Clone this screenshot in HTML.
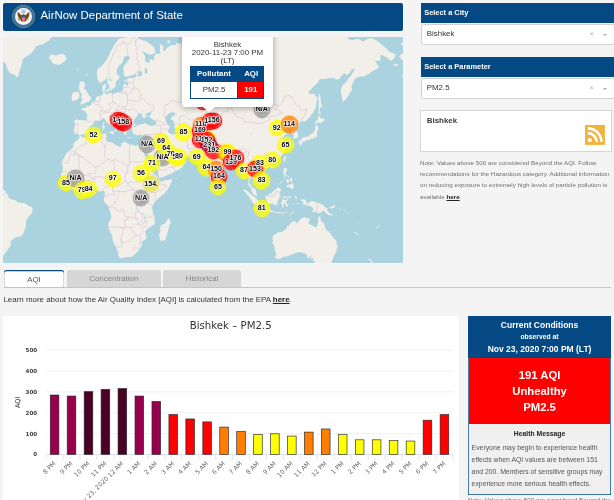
<!DOCTYPE html>
<html lang="en"><head><meta charset="utf-8"><title>AirNow Department of State</title>
<style>
html,body{margin:0;padding:0}
body{width:614px;height:500px;overflow:hidden;background:#f4f4f4;font-family:"Liberation Sans",Arial,Helvetica,sans-serif;position:relative;color:#333;will-change:transform}
.abs{position:absolute}
.hdr{left:3.3px;top:2.6px;width:399.8px;height:28.1px;background:#044983;border-radius:2px;box-shadow:0 0 0 .6px #fff}
.hdr .t{position:absolute;left:37.2px;top:-1.8px;line-height:28px;font-size:11.45px;color:#fff;white-space:nowrap}
.map{left:3.3px;top:36.9px;width:399.8px;height:226.3px;background:#aad3df;overflow:hidden}
.mk{position:absolute;box-sizing:border-box;width:16.4px;height:16.4px;margin:-8.2px 0 0 -8.2px;border-radius:50%;border:1.5px solid;background-clip:padding-box}
.ml{position:absolute;width:30px;margin:-4.4px 0 0 -15px;text-align:center;font-weight:bold;font-size:7.1px;line-height:8px;color:#000;text-shadow:0 0 1px #fff,0 0 1px #fff,0 0 1px #fff,0 0 1px #fff,0 0 1.5px #fff,0 0 1.5px #fff,0 0 2px #fff,0 0 2px #fff,0 0 2px #fff}
.pop{left:178.7px;top:-9.9px;width:91px;height:80.2px;background:#fff;border-radius:3.6px;box-shadow:0 1px 6px rgba(0,0,0,.35)}
.pop .tx{position:absolute;left:0;right:0;text-align:center;font-size:7.9px;line-height:9px;color:#333}
.tip{left:199.9px;top:70.2px;width:0;height:0;border-left:6.2px solid transparent;border-right:6.2px solid transparent;border-top:5.1px solid #fff}
.ptab{position:absolute;left:8px;top:38.6px;width:74.4px;height:33px;background:#044983}
.ptab div{position:absolute;text-align:center;font-size:7.9px}
.lab{left:421px;width:193px;height:19.6px;background:#044983;color:#fff;font-weight:bold;font-size:7.45px;line-height:19.6px;text-indent:3.2px}
.sel{left:420.6px;width:192.4px;height:19.2px;background:#fff;border:.6px solid #d2d2d2;border-radius:2.3px;font-size:7.9px;line-height:18.6px;text-indent:5.2px;color:#333}
.sel i{position:absolute;font-style:normal}
.note{color:#707070;font-size:6.25px;line-height:11.35px;white-space:nowrap}
.note b,.lm b{color:#222;text-decoration:underline}
.tab{top:269.6px;height:17px;background:#d6d6d6;border-radius:2.5px 2.5px 0 0;font-size:7.9px;line-height:18.4px;text-align:center;color:#858585}
.cc{left:468px;top:315.6px;width:143.1px;height:179px;background:#f0f0f0;box-shadow:inset 0 0 0 .7px #044983}
.cc div{position:absolute;left:0;right:0;text-align:center;white-space:nowrap}
</style></head><body>

<div class="abs hdr">
<svg class="abs" style="left:8.7px;top:2.5px" width="23" height="23" viewBox="-11.5 -11.5 23 23">
<circle r="11.3" fill="#2c5f9e"/><circle r="11.1" fill="none" stroke="#a9b866" stroke-width=".6"/>
<circle r="9.9" fill="#3f74b4"/><circle r="8.5" fill="#f6f4ee"/>
<circle cy="-4.700" r="2.300" fill="#a8c8e2"/>
<path d="M-5.600-4.800C-4.600-3.800-3.400-2.400-1.900-1.300L0-2.300 1.900-1.300C3.400-2.400 4.600-3.800 5.600-4.800 6.400-2.200 5.600.900 3.300 2.700L2.100 5H-2.100L-3.300 2.700C-5.600.900-6.400-2.200-5.600-4.800Z" fill="#6a4a1e"/>
<path d="M-1.600.300H1.600V2.800C1.600 3.900.8 4.500 0 4.800-.8 4.500-1.600 3.900-1.600 2.800Z" fill="#e8787c"/><rect x="-1.600" y="-.200" width="3.200" height="1.100" fill="#3b5aa0"/>
<path d="M-6.400 1.600C-5.600 3.200-4.400 4.200-3.200 4.400L-3.800 2.800Z" fill="#5d8a45"/><path d="M6.400 1.600C5.600 3.200 4.400 4.200 3.200 4.400L3.800 2.800Z" fill="#b9b9a8"/>
</svg>
<div class="t">AirNow Department of State</div>
</div>

<div class="abs map">
<svg class="abs" style="left:0;top:0" width="400" height="226.3" viewBox="0 0 400 226.3">
<path d="M-6.6 -6.9L49.6 -6.9L48.8 -0.1L45.6 3.7L42.3 5.8L39.4 7.4L35.8 8.1L32.9 9.4L31.7 11.8L29.3 15.1L26.8 17.5L23.6 19.2L21.1 20.8L19.5 23.2L19.2 26.5L17.9 29.7L16.6 33.0L15.9 36.7L14.6 40.3L13.0 39.5L11.4 37.4L8.9 37.1L6.5 35.4L4.5 32.2L3.2 28.1L1.6 25.7L0.3 24.0L-6.6 22.4ZM46.4 19.2L48.5 17.2L50.4 17.9L52.9 18.8L56.1 17.5L59.4 16.7L61.8 18.3L63.5 21.6L61.8 24.4L58.6 26.5L55.3 28.1L52.1 27.3L48.8 25.7L48.5 23.2L45.9 21.6ZM76.5 46.0L78.1 44.4L80.1 43.9L81.4 46.0L82.2 49.3L80.6 50.9L83.0 53.4L84.6 55.8L86.0 58.2L87.9 59.9L87.6 62.8L85.5 64.8L82.2 66.1L78.9 67.2L76.8 67.7L78.1 64.8L79.8 62.3L78.1 60.7L78.9 57.4L77.3 55.0L75.7 52.5L76.2 49.3ZM69.7 55.8L72.4 54.7L75.7 55.0L76.5 58.2L75.7 61.5L72.4 63.5L69.2 63.9L68.4 60.7ZM97.3 45.7L95.1 43.8L94.4 41.6L94.1 38.7L93.9 36.1L94.2 33.1L96.0 30.6L98.6 28.9L100.6 26.7L103.0 23.7L104.6 21.1L106.2 17.9L107.5 14.3L109.4 11.8L110.7 8.8L112.7 6.1L114.8 3.4L116.7 1.6L120.8 0.8L124.8 0.3L124.8 -9.3L134.5 -9.3L134.5 0.3L136.1 1.8L137.7 2.5L140.2 3.6L143.4 4.3L146.6 6.6L149.9 9.2L152.0 12.2L152.6 14.7L151.2 16.7L148.3 17.7L144.2 16.7L141.0 15.1L138.7 13.5L140.2 15.9L141.9 18.7L142.1 22.2L142.6 24.5L145.0 26.0L147.1 25.6L145.8 23.3L147.4 22.2L150.4 23.3L151.5 23.3L150.7 20.7L152.0 18.3L153.9 16.3L156.3 17.1L157.5 15.9L156.8 12.6L157.1 8.8L156.0 6.8L158.0 7.5L160.4 9.2L160.9 10.9L159.6 12.6L161.7 14.3L163.3 11.8L164.9 10.5L168.5 7.9L172.5 8.3L173.3 5.5L175.7 7.0L179.0 6.1L182.2 7.0L184.3 4.3L183.5 1.6L186.3 2.0L190.3 3.9L193.5 5.2L194.7 7.0L196.8 7.0L196.0 2.9L194.3 0.3L194.3 -9.3L344.6 -9.3L344.7 -0.1L346.0 2.5L349.3 3.2L353.3 2.1L357.4 2.5L359.4 4.8L362.3 3.2L365.6 1.6L368.8 1.2L372.9 3.2L377.0 6.1L381.0 9.4L384.3 12.6L386.7 15.1L390.0 15.9L392.9 17.5L391.6 20.8L388.4 24.0L385.9 22.4L383.5 20.0L381.0 19.2L378.6 17.5L377.0 20.8L377.8 23.2L374.5 24.0L372.1 23.2L373.7 26.5L376.1 29.7L373.7 32.2L370.4 33.8L367.2 35.8L363.9 37.9L360.7 39.5L357.4 39.5L355.0 40.3L351.7 42.0L350.1 45.2L348.5 49.3L349.3 52.5L346.8 55.8L345.2 59.1L342.8 62.3L340.3 65.1L339.2 61.5L338.2 57.4L337.9 52.5L339.5 48.5L342.8 45.2L346.0 41.1L348.5 37.9L350.9 33.8L351.7 31.4L349.3 32.2L346.8 35.4L344.4 37.9L341.1 36.3L338.7 38.7L336.2 42.0L333.0 42.8L330.5 41.1L326.5 41.1L321.6 42.0L316.7 42.0L316.7 42.8L314.3 46.0L311.0 49.3L307.8 52.5L305.3 55.0L307.8 57.4L311.0 56.6L313.5 59.9L314.5 62.1L313.7 63.9L313.0 67.8L312.9 70.3L311.2 73.2L310.0 75.8L307.5 79.1L305.1 82.0L301.9 84.5L299.3 84.0L297.3 85.8L295.9 87.7L295.7 89.0L293.0 90.9L292.2 92.2L293.6 93.8L295.2 96.9L295.4 98.9L294.8 100.7L293.0 101.3L290.6 102.1L290.2 100.9L290.6 98.9L290.7 96.9L288.4 95.3L288.1 93.6L288.6 91.8L287.2 90.9L284.1 91.8L282.6 93.0L282.0 91.8L283.6 89.7L281.7 88.8L279.4 90.9L276.8 92.4L276.3 93.6L278.3 95.7L278.4 96.5L281.3 95.3L284.1 96.1L283.9 97.1L280.5 98.9L278.9 100.9L280.5 102.9L281.5 105.2L283.1 107.3L283.1 108.8L281.5 109.9L283.3 110.7L282.6 113.3L281.2 114.4L279.6 117.8L277.0 120.5L274.7 122.6L270.7 124.4L269.5 124.6L265.5 126.0L264.5 126.7L264.7 127.9L263.5 127.9L263.4 126.0L261.3 125.6L259.0 126.8L258.5 127.0L257.2 129.2L257.1 130.4L258.2 132.7L260.0 134.2L261.1 135.0L262.3 137.7L262.7 140.2L262.6 142.0L260.6 143.7L259.2 144.5L258.5 146.0L256.1 147.4L255.5 146.0L255.8 145.1L255.0 144.5L253.4 144.2L252.4 142.5L251.3 141.5L249.3 140.7L249.2 139.5L248.5 139.2L247.7 139.9L247.5 141.9L246.6 143.8L246.4 146.3L247.9 147.6L248.5 149.7L250.6 150.9L251.7 151.7L253.2 153.6L253.4 156.5L254.5 159.1L253.4 159.3L251.3 157.8L249.8 156.5L248.7 154.6L248.2 152.5L248.0 150.9L247.2 150.1L245.4 148.4L245.3 146.0L245.4 143.8L245.6 141.9L244.8 138.9L244.1 136.9L243.8 134.3L242.5 133.5L241.6 134.3L240.1 135.5L238.5 135.2L238.6 132.7L238.3 130.4L237.4 128.7L236.2 128.0L235.1 126.1L234.4 124.4L233.1 123.9L232.0 124.9L229.9 125.3L228.3 125.4L226.7 126.1L226.4 127.3L225.9 128.4L223.8 129.2L222.0 131.1L220.7 132.3L219.1 134.0L217.3 135.2L215.8 136.0L215.5 138.5L215.8 140.0L215.2 141.9L215.0 144.7L213.7 146.0L212.4 147.0L211.3 148.3L209.7 146.8L209.2 145.1L208.1 142.7L207.0 140.4L205.8 137.2L205.3 136.0L204.5 133.5L203.7 130.1L203.7 127.5L203.6 125.8L203.2 124.6L202.4 126.3L200.8 127.2L199.2 126.7L197.6 124.6L199.7 123.3L197.2 122.6L196.3 121.9L194.8 120.7L194.2 119.9L193.5 118.9L190.3 119.3L186.7 119.4L185.4 119.4L184.0 119.1L181.4 118.9L179.5 118.4L178.2 116.8L177.4 116.1L177.2 117.2L177.2 118.7L177.1 119.4L177.8 120.9L179.8 121.9L180.8 122.1L182.7 124.0L181.9 126.0L180.9 127.5L179.5 129.2L179.3 130.3L177.4 131.8L175.3 132.7L173.5 133.5L170.4 135.2L167.7 136.9L165.4 137.7L162.8 139.0L158.8 140.5L156.3 140.8L156.0 141.2L155.9 142.5L156.3 143.2L158.0 144.5L158.8 144.5L162.0 143.3L165.2 143.0L168.1 142.0L169.0 142.1L168.6 144.5L167.5 147.6L166.0 150.1L164.4 152.8L162.3 155.3L160.4 157.4L159.3 158.1L157.1 159.8L154.7 162.0L153.1 164.1L151.3 165.6L150.8 166.7L150.1 168.0L149.4 169.5L148.7 171.1L149.5 172.4L149.9 174.4L150.0 176.0L150.7 178.1L151.5 179.3L151.5 181.8L151.8 185.1L151.8 186.3L150.5 188.1L148.3 189.6L145.8 190.8L144.2 192.5L142.4 194.1L142.1 195.6L143.1 197.9L143.4 201.0L142.6 202.6L140.2 203.7L138.7 204.9L139.2 206.8L138.4 209.5L136.1 212.1L134.8 214.4L132.9 216.6L131.1 218.0L128.9 219.4L127.4 219.9L124.8 220.1L121.7 220.3L118.3 221.5L115.9 220.6L115.8 219.7L114.9 217.6L115.6 215.7L114.0 212.9L112.7 209.7L110.6 206.0L109.4 202.3L109.4 199.5L107.7 195.8L105.9 192.2L105.1 189.6L105.4 187.3L106.2 185.1L107.7 181.9L108.3 179.3L107.3 175.7L105.9 171.3L105.1 169.2L103.8 167.5L101.8 165.4L100.6 163.0L101.0 160.8L101.7 159.6L101.8 157.4L101.8 155.9L101.7 154.9L100.4 154.1L99.4 154.1L97.3 154.3L95.7 154.4L94.1 152.0L93.1 151.2L91.5 151.0L89.9 151.1L87.9 151.5L86.0 152.3L85.7 152.5L82.8 153.6L81.1 153.1L79.5 152.9L76.3 153.6L73.9 154.3L71.4 153.1L68.5 151.2L67.4 150.2L65.8 149.2L64.7 147.6L63.8 146.0L62.4 144.3L61.6 143.5L60.1 142.2L59.0 141.2L58.8 139.5L58.5 138.4L57.7 137.4L59.2 135.5L59.3 134.3L59.8 132.1L60.1 131.6L59.6 129.4L59.3 128.4L58.4 127.0L58.7 125.3L60.1 121.9L61.7 120.0L62.6 117.7L64.7 114.8L65.1 114.3L67.4 113.1L69.5 111.6L70.3 109.8L70.2 107.7L71.1 105.8L72.3 104.2L73.7 103.7L75.0 102.8L76.0 100.5L76.5 99.3L76.9 98.9L75.8 97.9L74.8 96.5L73.2 96.9L71.5 96.9L71.8 94.9L70.7 93.4L71.0 92.0L71.6 90.3L72.0 88.3L71.7 86.2L71.0 84.2L72.6 83.1L73.5 82.6L76.8 83.0L79.9 83.2L83.1 83.5L83.7 82.9L84.1 80.5L84.1 78.1L84.1 77.0L82.4 74.6L80.5 73.4L78.9 73.2L78.3 72.0L80.2 70.7L82.8 71.1L83.4 71.1L83.4 68.6L84.0 68.6L84.2 69.4L86.2 69.0L87.8 67.9L88.6 66.0L89.0 65.3L90.1 65.0L91.3 64.3L91.8 64.1L92.6 62.6L93.4 60.2L94.7 59.2L97.2 58.9L98.9 58.1L99.9 57.5L100.4 57.0L99.9 54.7L99.4 53.0L99.1 50.1L99.9 48.4L102.0 46.9L103.1 46.4ZM-11.0 152.3L-0.5 152.3L1.4 153.5L2.7 154.3L3.5 156.5L5.2 158.5L5.2 160.6L7.6 161.7L8.4 162.4L10.0 162.4L11.6 163.0L13.6 164.0L14.4 165.4L15.8 165.3L18.1 165.9L20.5 165.9L22.1 166.3L23.7 167.4L25.4 168.8L27.0 169.7L28.6 169.8L29.1 170.8L29.7 172.9L29.6 174.5L28.3 177.1L26.1 179.1L25.4 180.1L23.7 182.6L22.9 184.3L22.9 185.6L23.1 187.6L22.6 190.6L21.8 191.8L21.6 193.7L20.8 194.9L19.7 197.2L19.7 197.9L18.1 199.5L16.1 199.6L13.7 200.0L11.1 201.4L8.5 203.2L7.6 204.1L7.6 207.9L7.1 209.5L5.6 211.0L4.7 212.9L3.5 214.7L1.8 216.3L-0.3 219.3L-11.0 219.9ZM312.5 87.7L313.5 87.0L314.3 86.9L314.0 85.8L315.0 85.1L317.6 86.5L319.5 84.3L321.8 83.5L321.0 81.3L319.3 82.0L317.8 81.2L315.5 78.6L315.0 78.8L315.0 82.1L314.5 83.8L312.9 83.5L312.7 84.7L312.1 85.4L312.5 86.8ZM313.8 87.5L314.7 87.7L314.8 89.7L315.6 91.6L315.0 93.0L314.0 94.4L313.9 96.9L313.8 99.5L312.1 101.1L312.1 99.7L311.1 100.5L310.5 101.7L309.5 101.7L307.5 101.7L307.4 102.3L305.5 103.9L304.5 102.5L303.6 102.5L303.0 104.3L301.9 103.8L301.1 105.3L300.1 104.4L299.4 104.1L299.3 104.3L298.6 106.9L298.4 108.0L297.3 108.6L296.7 108.2L296.5 106.5L296.2 106.2L295.9 105.4L295.4 104.1L296.9 103.7L297.7 103.0L298.2 102.1L299.5 101.1L300.5 100.0L303.0 99.8L304.6 99.4L306.0 99.6L306.9 97.7L308.1 95.9L307.9 97.4L309.6 96.5L310.8 95.0L312.1 93.0L311.9 90.8L312.4 90.3L312.9 88.1L313.6 88.9L313.8 88.6ZM316.7 56.4L317.6 60.0L317.7 63.9L318.5 67.8L320.0 70.7L317.4 69.8L316.6 73.9L317.9 75.6L318.0 77.3L316.8 76.0L315.7 77.7L315.4 75.8L315.8 72.7L315.6 69.0L315.9 65.5L315.1 62.1L315.5 58.9L316.1 57.2ZM282.5 119.1L283.3 119.6L282.3 123.0L281.4 125.1L280.2 123.2L280.4 121.8L281.7 119.6ZM261.8 129.6L263.4 128.2L265.3 128.4L265.5 129.1L264.7 130.4L263.2 131.5L261.8 131.0ZM281.0 131.0L283.6 131.0L283.9 133.2L282.6 135.2L282.6 136.9L283.3 138.2L285.4 138.7L286.7 140.9L285.4 140.2L284.1 139.0L282.8 138.7L281.0 138.2L281.5 137.5L280.4 137.2L279.9 135.0L280.5 134.2L280.7 132.7ZM288.8 145.5L290.2 147.6L290.7 149.6L290.1 151.2L288.8 152.3L288.4 151.5L286.8 150.9L286.5 149.9L285.5 149.4L283.4 150.2L283.4 148.7L285.4 147.4L287.6 147.6L288.4 146.8ZM287.0 141.0L288.6 141.0L289.4 143.5L288.4 144.8L287.6 144.8L287.2 143.0ZM283.1 142.0L285.1 142.5L286.5 143.2L285.5 146.1L284.2 146.1L283.3 144.3ZM275.5 147.8L279.2 143.0L279.6 144.3L276.8 147.1ZM280.5 139.5L282.3 139.7L282.1 141.4L281.3 141.0ZM263.3 158.1L264.4 158.7L266.0 157.5L266.1 156.9L268.7 156.2L270.3 154.1L272.0 153.3L273.6 151.7L274.9 150.1L276.3 151.0L277.0 151.9L278.7 153.0L277.8 154.3L276.6 154.5L276.2 155.9L276.8 157.8L278.3 159.8L276.5 160.1L276.0 162.4L274.9 163.5L274.1 165.4L274.4 167.1L273.6 167.9L271.3 167.9L271.1 167.1L268.7 166.6L266.8 167.1L264.2 166.1L263.9 163.8L262.6 161.4L262.1 159.9L262.3 159.0ZM240.1 152.3L243.0 153.0L244.8 154.4L245.6 155.3L247.5 156.7L248.3 157.7L250.0 158.7L251.6 159.9L252.7 160.8L253.8 161.9L253.4 163.0L254.8 163.0L255.0 164.5L257.4 166.3L257.1 168.2L257.2 170.8L256.1 170.8L255.0 170.6L254.0 169.8L251.3 167.5L249.3 165.1L248.3 162.9L246.6 160.9L245.6 158.7L244.0 157.5L243.2 156.2L241.4 154.7L240.1 153.0ZM256.1 172.4L257.4 171.0L258.8 171.3L261.5 172.3L264.5 172.7L265.3 171.8L266.1 172.3L268.2 173.1L268.7 173.9L270.3 173.9L271.0 174.7L271.0 175.6L268.7 174.9L265.5 174.8L262.3 173.9L260.2 173.9L258.0 173.3L256.6 172.5ZM271.1 174.5L274.7 174.9L278.4 174.9L281.7 175.0L284.9 174.7L284.6 175.5L280.0 175.7L277.6 175.7L275.2 176.0L273.6 175.8L272.1 175.7ZM278.4 176.7L281.3 177.5L280.4 178.1L278.4 177.3ZM285.7 178.1L287.2 176.5L288.9 175.4L291.8 175.0L290.6 176.0L288.1 177.3L286.5 178.1ZM279.7 160.3L281.3 159.3L283.3 159.7L285.4 159.9L287.6 158.7L288.5 159.1L287.2 160.8L285.2 160.9L282.5 160.7L280.5 160.7L280.1 162.4L281.0 163.3L282.1 162.8L283.8 162.6L285.5 162.6L285.5 163.0L283.6 164.0L282.6 164.5L283.1 165.6L283.9 166.7L284.9 167.9L285.2 169.2L284.2 170.1L283.1 169.2L282.5 167.9L281.5 165.8L280.7 166.7L280.5 169.2L280.7 170.4L279.2 170.3L279.2 167.9L278.1 166.3L278.4 165.0L279.2 163.0L279.7 161.6ZM292.2 157.8L293.0 159.3L294.1 159.0L293.0 160.6L294.3 160.9L293.0 162.7L292.5 161.4L292.2 159.8ZM293.0 166.3L297.5 166.7L296.2 167.2L293.3 167.1ZM289.7 166.6L291.7 166.9L290.9 167.6L289.7 167.2ZM298.2 162.8L300.1 162.0L302.8 162.7L303.2 164.6L304.1 166.7L305.3 166.7L306.7 165.0L309.0 163.8L310.8 164.6L313.5 165.5L314.5 165.8L318.2 167.1L319.8 167.7L321.8 169.8L323.5 171.0L325.0 171.6L323.7 172.3L324.2 173.6L325.6 174.9L326.1 175.8L327.4 176.2L328.6 177.2L329.9 178.1L329.2 178.7L326.9 178.1L325.2 177.8L323.9 176.8L322.1 174.9L321.8 174.3L319.7 173.7L318.0 174.9L317.7 175.9L315.6 176.3L314.0 176.2L312.2 174.5L309.5 175.0L308.5 174.9L310.1 173.1L310.6 172.3L309.3 170.3L306.7 169.0L304.6 168.6L302.0 167.5L300.7 167.9L299.4 166.1L301.5 165.4L299.6 164.8L297.8 163.7ZM325.8 170.5L328.6 169.5L331.0 168.2L332.3 168.4L331.8 170.0L329.8 171.3L327.7 171.4ZM329.8 165.6L332.6 167.4L333.4 168.8L332.8 167.9L331.0 166.6ZM336.1 170.1L338.1 172.4L337.1 172.1L336.0 170.8ZM339.1 172.3L340.7 173.4L344.4 175.0L343.9 174.4L341.5 173.2ZM344.1 176.5L346.0 177.5L345.2 176.7ZM345.7 175.0L346.8 177.0L346.3 175.4ZM351.2 194.6L353.6 196.1L356.0 198.4L355.1 198.4L352.8 196.8L351.3 195.1ZM355.4 185.9L356.4 186.8L356.0 187.1L355.4 186.6ZM372.7 190.1L374.8 190.3L374.6 191.3L372.9 191.2ZM374.8 188.6L376.9 188.1L376.3 189.0ZM215.1 145.6L215.7 145.5L217.3 147.6L218.4 149.6L218.1 150.9L217.0 151.5L215.7 151.7L215.1 150.2L215.0 148.4L215.2 146.8ZM165.7 180.9L167.2 183.4L167.7 186.4L166.4 187.6L165.9 190.7L164.9 194.4L163.6 198.4L162.2 203.0L159.3 204.2L157.1 203.2L156.5 200.3L156.0 197.9L157.1 195.3L157.6 194.4L157.1 191.8L157.8 188.1L159.3 187.6L160.9 187.1L162.5 185.8L163.5 184.1L164.1 183.3L165.1 181.8ZM270.6 197.5L270.8 198.8L272.1 197.3L274.9 195.6L277.8 194.9L280.0 194.2L282.5 192.7L283.6 191.0L284.7 188.3L285.9 189.8L286.0 188.0L287.3 186.6L288.6 185.3L291.2 183.9L292.7 184.9L293.3 185.9L294.6 185.8L295.6 185.8L295.2 184.3L296.2 183.4L297.6 181.7L298.6 181.3L300.4 181.1L300.4 179.6L301.9 180.6L304.3 181.3L307.4 181.3L306.7 182.9L305.9 183.6L305.8 185.4L304.9 185.9L307.0 187.4L308.7 188.0L310.8 189.1L311.7 190.1L313.8 190.1L314.6 187.6L315.0 185.1L315.0 182.6L315.4 181.9L315.8 179.8L316.4 178.8L317.1 180.1L317.7 181.8L318.0 183.9L318.7 184.9L319.7 184.6L321.0 186.7L321.8 189.1L322.2 190.7L323.4 193.1L325.8 194.4L327.3 196.4L328.4 198.4L329.8 199.6L330.7 201.1L332.4 202.8L333.7 204.6L333.7 207.3L334.3 208.9L334.5 209.8L333.6 212.9L333.3 215.0L331.5 217.8L330.7 219.6L330.0 220.8L329.8 222.1L328.9 223.3L328.5 226.0L328.5 226.9L326.1 227.6L325.3 227.7L322.7 230.2L321.3 229.2L320.3 227.9L318.0 229.7L316.4 228.7L315.0 228.6L313.4 228.0L312.1 226.3L311.4 223.9L310.6 223.0L309.3 223.1L310.0 221.6L309.3 220.3L308.7 222.1L307.4 222.4L308.3 219.9L308.5 219.7L308.8 217.0L308.5 218.1L307.9 219.3L306.6 220.1L305.8 221.4L304.6 220.9L304.0 218.6L303.0 217.6L302.2 216.4L299.4 216.1L298.1 215.1L294.4 215.5L291.4 216.6L288.9 217.4L286.5 218.2L286.3 219.1L283.1 219.6L280.0 219.8L279.1 220.7L276.6 222.0L274.5 221.9L272.2 220.6L272.0 219.0L273.0 218.6L273.2 216.1L272.4 214.2L272.0 212.9L271.3 210.0L270.6 208.0L269.0 205.2L269.4 205.0L270.3 205.7L269.8 203.0L269.4 201.4L269.9 200.0L270.0 198.8ZM365.3 220.8L365.8 220.7L366.5 221.9L367.7 222.3L368.2 223.5L368.7 224.7L368.7 225.6L369.8 224.9L370.4 226.3L370.9 227.2L374.6 227.3L373.8 231.0L368.5 231.0L368.7 228.1L368.7 227.5L368.2 226.0L367.7 224.7L366.4 222.9L365.9 222.2ZM397.9 5.7L398.4 8.1L400.5 9.2L402.9 5.7ZM396.3 19.5L398.1 17.1L402.9 15.9L402.9 23.7L399.1 23.3L397.4 21.1ZM398.6 38.4L400.5 38.1L400.5 40.0L398.9 40.0ZM390.5 28.1L392.4 26.5L395.3 28.1L393.2 29.2ZM164.4 3.4L166.5 3.2L167.2 5.2L165.2 6.4L164.1 5.2ZM74.0 31.7L75.5 31.7L75.2 34.1L74.2 33.1ZM83.4 36.8L84.5 37.1L84.1 39.7L83.4 38.7ZM172.3 140.9L174.1 140.9L174.0 141.4L172.5 141.4Z" fill="#f2efe9"/>
<path d="M76.3 98.9L77.3 98.6L78.9 97.5L80.3 97.5L82.0 97.3L82.8 97.5L83.4 96.1L84.4 95.7L84.9 95.7L85.2 94.2L86.3 93.3L85.5 91.9L86.0 90.7L87.5 89.2L88.0 88.4L89.6 87.7L91.3 85.8L90.9 84.7L92.0 83.4L93.4 83.4L94.7 83.6L95.6 84.0L96.8 83.8L97.8 82.7L98.6 82.5L100.4 81.1L101.8 81.9L102.7 83.1L103.0 84.5L105.1 86.2L105.7 87.0L106.4 87.6L108.0 88.2L109.0 89.0L109.2 89.4L109.9 89.3L110.3 90.3L111.2 90.6L111.9 92.0L112.2 93.4L111.3 94.9L112.0 95.1L112.8 94.1L113.7 93.0L112.7 91.3L113.8 89.8L115.1 90.6L115.7 91.1L115.9 90.4L115.0 89.3L113.2 88.3L112.2 86.6L110.3 86.4L109.0 85.3L107.8 82.9L106.4 81.9L106.2 80.0L106.0 78.8L108.2 78.2L108.5 80.2L109.3 79.1L110.6 81.8L112.5 83.1L115.3 85.0L116.9 86.2L117.5 87.9L117.5 89.8L118.3 91.0L118.7 91.8L119.6 92.9L120.1 94.3L123.0 94.9L120.4 95.3L121.0 96.9L121.1 97.3L122.4 98.1L123.0 97.9L123.5 98.0L122.9 95.8L123.8 96.1L123.2 95.1L124.2 95.0L124.8 95.6L124.9 94.5L123.1 92.2L123.0 90.9L123.0 89.6L123.8 90.3L124.6 90.8L125.5 90.4L124.5 89.2L125.5 88.7L127.9 88.9L128.4 90.6L128.2 91.8L129.3 92.2L129.4 93.3L128.5 94.3L130.1 95.2L130.3 96.9L131.7 97.3L133.1 97.7L133.9 98.5L135.2 98.4L135.6 97.2L137.7 97.9L139.0 98.8L140.8 98.3L141.9 97.3L143.6 97.7L144.5 97.7L144.1 98.9L143.8 99.9L143.9 102.0L143.4 103.1L142.6 105.2L142.2 106.6L141.6 107.7L140.7 108.3L138.2 108.1L137.4 107.7L135.2 107.8L134.3 108.3L132.7 108.9L130.0 108.0L126.7 107.6L124.8 106.5L122.6 105.3L120.9 105.0L118.4 106.5L118.3 108.8L117.0 110.0L112.8 108.3L110.4 106.0L107.3 105.0L105.6 105.0L104.1 104.4L103.6 103.5L102.3 103.1L103.4 101.5L103.9 99.9L103.2 99.3L103.1 98.1L103.9 96.8L102.7 97.2L101.9 96.3L100.1 97.0L98.5 97.1L97.2 97.1L95.3 97.3L94.2 97.4L90.9 97.3L88.1 97.9L84.9 99.5L82.9 100.7L81.2 100.3L79.7 100.4L77.4 99.1L76.3 99.3ZM133.1 88.2L131.3 86.6L130.5 85.3L131.1 83.8L132.3 81.6L134.0 79.3L135.7 76.3L136.9 76.0L138.6 77.2L140.3 77.2L138.6 78.9L140.0 80.8L141.2 81.0L143.2 79.7L145.0 79.1L143.2 78.6L142.3 77.0L145.5 75.8L146.7 75.0L148.9 74.6L149.5 74.8L147.9 75.8L147.8 77.4L146.5 78.9L145.3 79.4L146.3 80.0L147.1 80.4L149.1 81.8L150.2 83.0L152.3 84.2L153.3 86.1L153.3 87.3L151.5 88.5L150.2 88.6L148.1 88.7L144.8 87.9L142.8 86.3L140.6 86.5L137.4 87.6L135.0 88.2ZM129.2 89.8L130.5 88.7L132.7 88.6L134.3 89.1L132.9 89.9L131.0 90.0ZM162.8 84.2L164.1 86.3L166.4 89.4L167.4 89.9L166.7 90.0L165.9 92.0L165.1 93.3L165.1 94.1L166.0 95.9L167.7 96.9L169.1 97.5L171.1 97.5L173.2 97.2L173.3 96.9L173.2 95.3L173.0 93.0L171.7 90.7L171.2 89.4L171.7 88.6L171.5 87.1L170.7 86.2L171.1 84.7L168.8 82.8L167.3 81.3L168.3 80.7L168.5 79.7L170.1 78.8L171.7 79.1L172.0 76.7L171.4 75.3L169.6 75.3L167.7 75.8L165.6 76.5L164.4 77.9L163.1 79.1L161.8 80.7L162.5 82.5ZM157.0 141.4L155.9 140.7L155.1 140.2L153.1 138.0L149.9 135.9L148.4 131.8L146.2 129.1L145.8 126.7L145.7 124.9L143.9 121.6L142.6 119.8L141.5 117.7L140.7 115.6L139.4 113.7L138.7 111.8L138.6 110.6L139.0 111.4L139.7 113.1L140.3 113.8L141.4 114.8L141.9 113.5L142.5 111.4L142.4 113.3L141.9 114.2L143.7 115.5L144.9 117.5L147.4 121.2L149.1 123.5L149.3 125.8L151.2 128.2L152.5 129.9L154.8 133.7L155.4 137.2L155.9 139.7L156.3 140.8L157.1 140.9ZM178.2 116.9L177.0 115.7L174.8 116.8L172.5 116.6L171.1 115.3L170.2 114.6L168.1 112.5L167.1 110.4L165.2 109.8L164.9 109.9L163.6 111.6L164.3 113.3L164.9 114.8L166.4 116.0L167.0 117.0L167.2 118.6L168.1 120.2L168.1 118.7L168.8 117.6L169.4 118.2L169.4 119.1L169.4 120.3L169.0 120.9L170.9 121.1L174.0 120.5L175.4 119.1L176.6 118.2L177.1 117.2L177.8 117.5ZM97.3 46.1L97.4 45.7L98.9 45.4L100.2 44.3L102.2 42.6L103.0 41.6L103.3 39.7L103.5 41.6L103.8 42.3L104.1 42.9L104.3 44.7L105.2 46.6L105.7 48.4L106.7 49.7L106.1 50.7L106.5 51.5L107.0 52.8L106.8 53.3L107.3 53.5L108.3 53.3L109.2 52.9L109.0 51.9L111.2 51.2L112.5 49.7L112.9 46.4L113.3 43.8L115.0 42.9L115.8 41.6L116.6 40.0L116.4 39.1L113.8 37.1L113.7 33.7L114.1 31.3L115.1 30.4L116.4 28.1L118.8 26.7L120.3 23.0L120.8 20.7L121.9 19.5L125.0 18.7L125.7 19.1L127.1 21.8L125.6 23.0L123.4 26.1L120.8 28.9L120.4 31.7L120.9 34.4L120.7 35.8L120.8 38.1L123.1 40.0L126.3 38.9L129.6 37.9L132.4 37.1L134.8 39.5L132.9 39.5L131.4 41.1L126.0 41.1L124.0 42.6L124.0 44.4L125.6 44.4L125.3 46.3L125.0 48.5L123.5 48.7L122.5 46.4L120.8 47.5L120.0 50.1L120.1 52.5L119.1 54.5L118.2 55.3L116.2 56.1L116.4 55.6L115.6 55.0L114.4 55.2L111.1 56.7L109.0 57.5L108.0 55.6L105.6 56.8L103.6 57.4L102.4 56.1L101.3 55.0L101.5 53.9L101.4 53.0L102.5 51.2L103.6 50.4L102.7 49.6L102.7 48.7L103.1 47.3L103.2 46.6ZM134.8 39.4L136.1 39.5L138.6 38.7L139.4 36.8L138.7 35.1L136.5 33.6L134.5 35.4L135.2 37.8ZM141.6 36.1L143.4 36.4L144.9 34.8L143.4 31.3L142.1 29.9L141.9 32.7ZM106.1 42.9L107.2 44.4L108.8 42.9L107.7 41.3ZM137.4 161.9L138.6 160.9L140.8 160.8L141.9 162.2L140.8 165.0L139.4 166.1L137.7 165.6L137.3 163.3ZM133.2 166.9L134.0 168.7L134.0 171.1L135.6 174.1L136.5 175.5L135.3 174.7L133.5 171.4L133.1 168.7ZM141.0 177.0L141.9 179.3L142.4 181.8L142.9 184.8L141.9 184.6L141.5 181.8L141.1 179.3L140.7 177.7ZM205.0 77.0L207.3 75.6L210.5 75.8L214.1 75.6L212.9 76.6L209.7 76.7L207.3 77.4L205.7 78.4ZM183.3 76.7L184.5 76.0L184.6 77.0L183.7 77.4ZM247.1 97.5L248.0 96.5L249.0 97.1L248.0 97.7Z" fill="#aad3df"/>
<path d="M101.2 84.2L101.4 86.2L100.9 87.7L100.2 87.5L99.9 86.4L99.9 85.6L100.6 84.9L101.1 84.3ZM100.9 88.1L101.8 89.7L101.5 92.4L100.7 92.6L99.6 92.8L99.6 90.9L99.2 89.4L99.3 88.6L100.4 88.5ZM106.1 95.3L107.5 94.5L111.2 94.3L110.4 95.9L110.7 96.9L110.4 97.6L109.0 96.8L107.8 96.3L106.4 95.8ZM124.1 99.7L125.1 100.1L126.6 100.2L128.5 100.3L128.4 100.9L126.1 101.1L124.2 100.5ZM138.2 100.8L139.4 100.2L141.9 99.5L140.8 100.8L140.4 101.2L139.4 101.7L138.4 101.4ZM89.9 91.6L91.0 90.8L91.6 91.3L90.9 92.2L90.4 91.8ZM103.9 52.5L104.9 51.7L106.4 51.5L106.4 52.8L105.7 53.9L105.4 55.3L103.8 55.0L103.9 53.6ZM101.8 53.0L103.3 53.0L103.5 54.2L102.3 54.3ZM115.4 48.7L116.4 46.0L117.0 46.0L116.4 47.8ZM121.3 44.7L121.9 43.8L122.5 42.4L123.5 43.8L123.0 44.7L121.9 45.7ZM123.7 92.9L125.1 93.6L125.8 94.9L125.0 94.3L123.7 93.4ZM131.0 98.1L131.7 98.1L131.1 99.1Z" fill="#f2efe9"/>
<path d="M104.6 42.6L105.2 40.3L106.2 38.7L105.9 36.1L105.7 34.1L105.6 31.7L105.7 29.2L105.6 27.0L107.0 25.2L108.6 23.7L108.2 21.8L109.4 19.9L109.6 17.5L111.1 16.3L111.9 13.9L112.5 11.8L114.0 9.2L115.3 7.5L118.3 7.9L119.0 5.0M119.1 5.0L120.8 6.6L123.2 8.3L124.3 10.1L124.0 13.0L124.8 14.7L124.6 17.1L125.0 18.7M119.1 5.0L120.4 3.9L122.2 6.4L123.7 6.8L126.3 7.0L127.7 5.2L128.0 2.0L131.1 0.3L132.9 2.0L132.7 5.0L133.4 2.9L134.5 2.5L135.8 1.6M132.7 5.0L132.1 7.5L134.3 10.9L132.9 14.3L134.7 19.1L134.0 22.6L135.3 24.8L134.5 26.7L136.9 29.6L136.5 31.0L134.0 35.1L131.0 37.8M131.3 41.1L130.5 44.1L130.3 47.2L131.3 49.9L131.6 51.2L134.5 52.0L136.0 52.8L136.1 55.3L138.6 58.6L136.8 59.4L137.4 62.4L140.7 61.7L143.4 65.2L143.6 66.7L146.6 67.0L147.4 68.0L150.8 68.8L150.4 71.2L150.5 72.9L147.9 74.4M124.2 63.9L126.4 62.9L130.5 63.7L133.4 64.2L135.3 64.4L137.4 62.4M122.9 56.3L124.0 57.5L124.6 60.8L124.2 63.9L125.0 65.7L122.7 69.0L122.5 70.0L121.9 71.7L123.2 72.7L126.3 73.4L129.0 72.0L130.5 71.6L131.6 72.2L133.2 73.9L134.7 76.5M118.0 56.0L122.9 56.3L122.9 54.5L120.1 53.6M120.0 51.3L121.6 50.4L126.3 50.4L129.0 52.5L129.0 53.6L127.6 56.4L124.0 57.5M125.3 46.1L126.9 45.7L130.3 47.2M129.0 52.5L131.6 51.2M109.0 57.5L109.3 60.2L109.8 62.6L110.3 65.2L109.1 65.5L105.9 67.0L108.3 70.7L107.0 72.0L106.7 73.4L103.0 73.9L101.5 73.9L98.3 73.7L99.3 70.3L96.3 69.0L95.9 67.5L95.7 65.7L97.2 62.9L97.6 59.4M110.3 65.2L113.2 67.0L116.4 69.0L122.5 70.0M116.4 69.0L113.5 71.0L113.7 72.7L111.9 75.6L108.2 76.3L105.7 75.1L103.0 75.3L101.5 73.9M113.7 72.7L116.4 73.2L119.1 71.5L121.9 71.7M111.9 75.6L112.7 76.5L116.6 77.7L118.8 77.1L120.3 76.5L123.0 72.7M118.8 77.1L120.6 80.2L122.4 80.7L122.7 81.6L125.6 82.7L129.7 81.8L132.2 82.7M122.4 80.7L122.2 84.2L122.2 85.8L123.0 87.9L125.6 87.5L128.5 87.1L131.3 86.4M128.5 87.1L128.0 89.1M108.2 78.4L110.7 78.6L112.7 76.5M111.5 79.3L111.9 82.0L114.5 84.2L115.9 85.3M111.5 79.3L116.7 79.7L117.4 82.0L117.0 84.2L115.9 85.3M117.0 84.2L118.8 84.7L119.3 86.4L119.1 88.6L120.0 89.0L118.8 91.3M120.0 89.0L123.0 87.9M83.1 83.5L87.1 84.9L91.2 85.4M98.1 82.5L97.3 79.7L97.3 77.7L99.7 76.7L103.0 75.3M97.3 77.7L95.7 77.0L98.3 73.7M90.1 65.0L92.8 67.8L95.9 67.5M91.5 64.3L94.1 64.1L95.7 65.7M71.7 86.6L75.3 86.6L74.8 90.7L74.0 92.8L74.0 96.5M99.9 54.7L101.3 55.0M153.2 87.5L156.3 88.4L158.4 91.3L157.1 92.0L158.0 95.3L158.4 96.7L154.6 96.7L149.1 97.5L145.3 97.3L144.5 99.3M150.5 83.4L154.7 83.8L158.8 85.1L161.2 86.9L164.6 86.9M158.4 91.3L161.2 93.0L163.6 91.6L165.1 94.1M156.3 88.4L158.8 87.9L161.2 86.9M158.4 96.7L160.4 99.3L159.6 102.9L163.3 108.6L164.6 110.7M154.6 96.7L152.6 101.5L148.7 104.0L145.5 106.2L143.7 105.4L143.6 104.2L145.2 102.5L144.2 101.6M148.7 104.0L149.4 106.5L151.3 106.9L153.9 108.4L158.3 112.0L161.2 112.2L163.1 113.3L164.3 113.2M149.4 106.5L145.8 107.7L147.4 109.6L146.6 110.5L144.2 112.0L142.5 111.4M142.5 111.4L141.4 108.3M143.4 105.8L143.2 108.1L142.5 111.4M155.2 134.5L156.0 132.8L159.1 132.8L162.8 133.5L165.4 130.8L170.1 130.1L174.9 128.4L176.1 124.9L175.3 123.7L171.1 123.3L169.4 120.9M170.1 130.1L171.9 134.1M175.3 123.7L176.6 121.2L177.2 119.8M176.1 124.9L174.9 128.4M161.8 80.4L160.4 78.6L162.5 73.4L161.2 71.7L162.0 67.8L164.7 68.0L168.1 63.4L174.1 65.2L179.0 65.5L182.2 66.2L185.3 65.7L184.6 62.6L184.6 57.5L191.1 56.1L196.3 54.5L200.5 53.6L201.1 57.0L204.7 57.5L209.7 56.7L212.0 59.2L215.5 65.7L220.2 65.2L223.9 68.8L227.2 70.0M227.2 70.0L224.6 71.7L224.3 74.8L220.2 74.6L219.1 78.6L215.4 79.7L215.8 84.7L215.7 86.2M173.2 96.2L176.6 94.7L178.5 94.5L181.9 95.9L184.8 97.7L185.0 99.7M170.7 87.0L173.3 85.7L175.6 87.9L176.6 87.9L176.6 79.7L180.8 78.4L184.6 81.1L186.3 83.1L190.9 82.7L192.9 84.2L192.7 86.4L196.0 88.6L199.2 86.4L200.8 85.8L204.8 85.6L205.7 83.8L208.6 84.3L214.1 84.7L215.7 86.2M176.6 87.9L178.2 87.9L180.8 84.7L183.0 86.0L186.1 88.4L189.5 93.0L193.5 96.1M185.0 99.7L190.3 98.3L193.5 96.1L196.0 96.9L198.4 95.7L201.6 97.5L207.1 96.4M185.0 99.7L183.8 103.5L184.3 107.7L185.8 107.9L184.5 110.9L187.1 111.6L193.2 110.7L193.9 108.3L198.1 106.9L199.2 103.3L201.0 102.7L201.6 97.5M185.6 119.3L185.9 117.5L188.2 115.7L187.5 113.7L184.5 110.9M207.1 96.4L206.5 91.8L205.2 91.8L205.0 90.7M215.7 86.2L212.1 88.6L208.9 89.9L205.3 91.1M196.3 121.9L200.8 120.5L199.2 115.1L202.4 112.4L205.5 110.5L206.6 107.7L207.8 106.2L205.7 104.8L205.5 101.7L210.5 100.5L211.8 99.9M207.1 96.4L211.8 99.9L213.7 102.3L213.3 105.8L214.6 108.6L217.0 110.1L215.5 112.7L220.7 115.3L224.7 116.8L228.5 117.1L228.5 114.4L229.6 115.5L231.2 116.6L234.9 116.2L234.1 114.6L238.0 112.4L241.2 111.6L243.3 113.8M217.0 110.1L220.2 112.0L225.1 114.2L228.5 114.4M228.5 117.1L228.9 119.3L229.8 121.0L229.4 122.6L230.1 124.9M228.9 119.3L231.2 117.7L231.3 119.1L235.4 119.6L233.5 121.4L234.1 123.2L235.2 121.9L235.7 126.0L235.2 127.2M243.3 113.8L239.9 117.8L238.0 121.6L236.9 121.4L236.7 124.6L235.7 126.0M243.3 113.8L245.6 114.9L245.6 118.0L243.8 120.7L246.1 123.0L246.4 124.7L249.5 125.3L247.9 127.7L244.8 128.9L243.5 131.0L245.6 134.3L244.8 136.7L246.4 139.0L247.1 142.2L245.8 144.5M249.5 125.3L251.1 124.2L252.6 124.0L256.3 122.6L258.4 123.3L258.5 124.9L260.6 125.7M247.9 127.7L249.6 129.2L249.8 132.3L251.1 131.5L254.2 131.3L255.5 134.5L256.8 137.9L259.8 137.5L259.8 141.2L257.4 143.5L254.9 144.4M256.8 137.9L252.6 138.0L251.6 139.2L252.4 142.3M251.1 124.2L254.0 126.8L254.2 129.1L256.1 130.6L259.0 134.7L259.8 137.5M247.9 150.9L249.5 152.2L251.1 151.4M263.3 158.1L265.2 159.9L267.4 159.0L271.3 159.0L273.1 154.6L276.2 154.6M314.0 165.6L314.0 176.2M286.7 176.7L288.3 176.3L288.1 177.0M227.2 70.0L228.3 71.2L233.0 79.3L240.3 81.3L241.9 84.9L247.7 85.1L255.0 86.6L259.8 85.6L266.9 82.7L266.9 79.7L273.1 78.8L279.9 75.8L275.8 73.5L272.9 72.9L274.7 68.3L276.5 69.0L278.9 66.9L281.3 61.0L281.7 59.2L285.9 58.5L289.7 60.5L292.2 67.3L297.3 70.5L297.7 73.4L303.8 72.0L301.2 79.5L298.3 82.0L298.2 84.5L297.2 85.6M227.2 70.0L230.9 68.0L235.2 65.7L245.0 66.5L244.1 65.2L245.9 62.4L251.3 64.4L251.4 66.2L258.5 67.0L261.6 69.5L268.4 69.0L270.8 67.0L274.7 68.3M297.2 85.6L295.7 85.6L293.1 86.4L293.0 87.7L291.2 86.9L287.2 90.7M290.9 95.3L293.5 93.6M64.7 114.8L71.9 114.8L71.9 112.9L80.2 107.3L83.9 106.4L83.1 102.1L82.4 100.7M71.9 115.5L78.2 119.6L87.9 126.5L91.2 128.7L91.3 130.1L92.9 129.8L95.4 129.3L105.4 122.3M58.5 126.0L65.0 126.0L65.0 123.2L66.6 122.4L66.6 117.8L71.9 117.8L71.9 115.5M71.9 115.5L78.2 119.6L75.5 119.6L77.1 136.0L71.0 136.0L68.4 136.7L66.3 137.2L62.9 134.2L59.5 135.0M105.4 122.3L102.0 120.0L101.4 117.1L101.8 113.7L102.0 110.5L100.7 108.3L99.4 105.8L98.1 103.3L99.3 101.5L99.9 97.1M102.0 110.5L102.7 107.3L104.6 105.4L104.7 104.5M126.7 107.4L126.4 112.0L126.4 124.9L126.4 128.4L124.8 128.4L124.8 129.2L111.9 122.4L110.3 123.2L109.0 123.9L105.4 122.3M126.4 124.9L136.6 124.9L145.7 124.9M124.8 129.2L124.8 135.7L123.0 135.7L122.4 138.4L121.6 140.9L123.0 143.5L124.3 146.8L125.1 147.3L126.6 144.7L131.1 145.8L132.9 145.6L134.5 144.7L136.6 145.5L138.4 142.3L139.7 144.0L140.8 146.0L139.4 148.7L141.1 150.5L143.1 152.7M110.3 123.2L111.7 127.7L111.1 133.7L108.0 139.0L108.8 141.2L110.3 141.7L110.7 145.1L108.5 145.1L110.9 149.1L109.4 151.5L109.6 153.8L112.0 157.8L109.4 157.8L107.5 157.8L104.3 157.8L104.4 159.8L101.8 159.8M92.9 129.8L92.8 134.2L91.7 136.2L88.1 136.4L86.3 136.9L86.6 139.2L89.6 141.2L91.8 142.3L91.8 139.0L92.6 139.4L96.8 139.5L100.6 140.5L105.9 140.0L108.0 139.0M86.3 136.9L79.7 139.5L77.6 142.2L77.1 144.5L73.1 144.8L72.6 143.5L67.4 141.2L66.3 137.2M67.4 141.2L63.8 140.9L59.0 141.3M63.8 140.9L63.8 142.3L61.7 143.6M64.5 146.7L65.8 145.3L67.9 145.1L69.3 147.6L67.4 150.2M69.3 147.6L70.8 149.4L72.3 149.1L73.9 152.0L73.9 154.3M73.1 144.8L73.7 146.1L72.3 149.1M77.1 144.5L81.5 145.6L81.6 148.6L80.8 151.2L81.5 153.1M81.5 145.6L81.3 143.5L85.8 143.3L87.5 143.5L88.6 146.8L88.6 151.4M87.5 143.5L89.6 141.2M86.3 143.5L87.0 147.9L86.8 150.1L87.9 151.5M91.8 142.3L90.5 146.8L90.4 151.0M99.9 153.6L101.8 150.4L104.8 150.7L107.2 146.0L109.0 142.7L108.8 141.2M109.6 153.8L116.1 154.4L115.9 155.7L115.3 157.8L114.8 161.1L112.2 164.6L110.6 167.9L107.2 168.8L105.7 170.7M109.4 151.5L110.9 149.1L116.1 148.4L123.0 143.5M116.1 154.4L122.2 154.8L126.9 153.3L130.3 153.1L133.7 154.3L135.9 155.7M130.3 153.1L128.7 150.7L125.1 147.3M135.9 155.7L141.0 154.6L143.1 152.7L144.1 154.0L145.7 154.2L147.6 155.6L150.0 155.7L152.3 155.0L153.8 155.0L155.5 153.6L158.8 153.3L163.6 148.4L157.1 146.8L155.4 143.6L154.6 141.0L152.0 138.4L147.3 137.0L145.0 138.0L144.4 140.7L141.1 145.1L140.8 146.0M145.0 138.0L145.7 134.7L148.3 131.8M155.8 142.5L153.6 143.5L154.6 141.0L155.7 140.7M152.3 155.0L152.3 162.9L153.2 164.1M141.0 154.6L142.6 158.7L140.8 161.2L141.0 163.0L146.8 166.3L149.4 168.9M135.9 155.7L136.5 157.8L133.9 162.2L133.9 163.7L135.3 163.1L140.8 163.0M133.9 163.7L132.9 165.8L133.2 168.5M135.3 163.1L135.8 165.3L135.2 168.5L133.5 168.6M105.7 170.7L112.8 171.0L114.3 174.5L117.4 174.4L118.3 172.7L121.3 173.2L121.4 177.7L122.1 179.6L124.8 179.1L125.0 182.6L121.6 182.6L121.6 188.0L123.8 190.3L118.3 190.8L115.9 190.0L108.6 190.0L105.1 189.7M124.8 179.1L126.9 180.3L130.0 180.3L131.9 181.8L134.2 183.4L134.2 181.2L131.9 180.6L132.4 177.0L132.7 175.2L135.8 174.7L139.2 176.7L141.0 176.8M139.2 176.7L139.8 184.3L134.8 185.6L135.2 187.0L139.2 188.8L141.5 184.9L144.1 185.8L143.1 189.5L139.0 191.0L139.4 194.1L138.6 196.7L136.6 198.6L137.7 202.3L137.6 204.8L139.2 206.5M141.9 180.3L146.6 180.5L151.3 178.5M123.8 190.3L126.9 190.7L129.7 190.9L132.7 187.5L135.2 187.0M126.9 190.7L128.4 192.7L130.8 195.3L133.5 198.2L136.6 198.6M118.3 190.8L120.0 191.5L120.0 197.9L118.3 197.9L118.3 202.8L118.3 209.3L114.1 209.9L112.7 209.7M118.3 202.8L119.6 206.4L122.5 205.1L125.9 204.6L127.9 202.6L129.7 200.7L133.5 198.2M137.6 204.8L136.6 207.3L137.9 206.4M132.2 209.9L133.5 211.5L131.4 213.4L129.7 211.5L132.2 209.9M-0.5 157.7L0.9 157.4L2.4 154.9" fill="none" stroke="#c9a9c9" stroke-width=".5" stroke-opacity=".8"/>
</svg>
<div class="mk" style="left:62.7px;top:146.1px;background-color:rgba(255,255,0,0.78);border-color:#ffff00;box-shadow:0 0 1.2px .2px rgba(255,255,0,0.90)"></div>
<div class="mk" style="left:72.3px;top:141.6px;background-color:rgba(153,153,153,0.78);border-color:#999999;box-shadow:0 0 1.2px .2px rgba(153,153,153,0.90)"></div>
<div class="mk" style="left:78.5px;top:153.5px;background-color:rgba(255,255,0,0.78);border-color:#ffff00;box-shadow:0 0 1.2px .2px rgba(255,255,0,0.90)"></div>
<div class="mk" style="left:85.3px;top:152.2px;background-color:rgba(255,255,0,0.78);border-color:#ffff00;box-shadow:0 0 1.2px .2px rgba(255,255,0,0.90)"></div>
<div class="mk" style="left:109.4px;top:141.9px;background-color:rgba(255,255,0,0.78);border-color:#ffff00;box-shadow:0 0 1.2px .2px rgba(255,255,0,0.90)"></div>
<div class="mk" style="left:90.1px;top:98.1px;background-color:rgba(255,255,0,0.78);border-color:#ffff00;box-shadow:0 0 1.2px .2px rgba(255,255,0,0.90)"></div>
<div class="mk" style="left:114.9px;top:83.2px;background-color:rgba(255,0,0,0.78);border-color:#ff0000;box-shadow:0 0 1.2px .2px rgba(255,0,0,0.90)"></div>
<div class="mk" style="left:117.5px;top:84.5px;background-color:rgba(255,0,0,0.78);border-color:#ff0000;box-shadow:0 0 1.2px .2px rgba(255,0,0,0.90)"></div>
<div class="mk" style="left:120.0px;top:85.9px;background-color:rgba(255,0,0,0.78);border-color:#ff0000;box-shadow:0 0 1.2px .2px rgba(255,0,0,0.90)"></div>
<div class="mk" style="left:143.8px;top:107.5px;background-color:rgba(153,153,153,0.78);border-color:#999999;box-shadow:0 0 1.2px .2px rgba(153,153,153,0.90)"></div>
<div class="mk" style="left:159.3px;top:120.5px;background-color:rgba(153,153,153,0.78);border-color:#999999;box-shadow:0 0 1.2px .2px rgba(153,153,153,0.90)"></div>
<div class="mk" style="left:137.9px;top:161.1px;background-color:rgba(153,153,153,0.78);border-color:#999999;box-shadow:0 0 1.2px .2px rgba(153,153,153,0.90)"></div>
<div class="mk" style="left:157.6px;top:104.7px;background-color:rgba(255,255,0,0.78);border-color:#ffff00;box-shadow:0 0 1.2px .2px rgba(255,255,0,0.90)"></div>
<div class="mk" style="left:162.9px;top:111.9px;background-color:rgba(255,255,0,0.78);border-color:#ffff00;box-shadow:0 0 1.2px .2px rgba(255,255,0,0.90)"></div>
<div class="mk" style="left:167.4px;top:117.3px;background-color:rgba(255,255,0,0.78);border-color:#ffff00;box-shadow:0 0 1.2px .2px rgba(255,255,0,0.90)"></div>
<div class="mk" style="left:173.2px;top:120.7px;background-color:rgba(255,255,0,0.78);border-color:#ffff00;box-shadow:0 0 1.2px .2px rgba(255,255,0,0.90)"></div>
<div class="mk" style="left:175.7px;top:119.9px;background-color:rgba(255,255,0,0.78);border-color:#ffff00;box-shadow:0 0 1.2px .2px rgba(255,255,0,0.90)"></div>
<div class="mk" style="left:180.1px;top:95.6px;background-color:rgba(255,255,0,0.78);border-color:#ffff00;box-shadow:0 0 1.2px .2px rgba(255,255,0,0.90)"></div>
<div class="mk" style="left:148.7px;top:126.6px;background-color:rgba(255,255,0,0.78);border-color:#ffff00;box-shadow:0 0 1.2px .2px rgba(255,255,0,0.90)"></div>
<div class="mk" style="left:137.7px;top:136.5px;background-color:rgba(255,255,0,0.78);border-color:#ffff00;box-shadow:0 0 1.2px .2px rgba(255,255,0,0.90)"></div>
<div class="mk" style="left:147.9px;top:147.1px;background-color:rgba(230,230,50,0.78);border-color:#e6e632;box-shadow:0 0 1.2px .2px rgba(230,230,50,0.90)"></div>
<div class="mk" style="left:193.4px;top:120.3px;background-color:rgba(255,255,0,0.78);border-color:#ffff00;box-shadow:0 0 1.2px .2px rgba(255,255,0,0.90)"></div>
<div class="mk" style="left:203.1px;top:130.5px;background-color:rgba(255,255,0,0.78);border-color:#ffff00;box-shadow:0 0 1.2px .2px rgba(255,255,0,0.90)"></div>
<div class="mk" style="left:212.8px;top:132.7px;background-color:rgba(255,126,0,0.78);border-color:#ff7e00;box-shadow:0 0 1.2px .2px rgba(255,126,0,0.90)"></div>
<div class="mk" style="left:215.7px;top:139.9px;background-color:rgba(255,0,0,0.78);border-color:#ff0000;box-shadow:0 0 1.2px .2px rgba(255,0,0,0.90)"></div>
<div class="mk" style="left:214.6px;top:150.3px;background-color:rgba(255,255,0,0.78);border-color:#ffff00;box-shadow:0 0 1.2px .2px rgba(255,255,0,0.90)"></div>
<div class="mk" style="left:199.7px;top:65.2px;background-color:rgba(255,0,0,0.78);border-color:#ff0000;box-shadow:0 0 1.2px .2px rgba(255,0,0,0.90)"></div>
<div class="mk" style="left:197.5px;top:87.9px;background-color:rgba(255,126,0,0.78);border-color:#ff7e00;box-shadow:0 0 1.2px .2px rgba(255,126,0,0.90)"></div>
<div class="mk" style="left:206.8px;top:84.6px;background-color:rgba(255,0,0,0.78);border-color:#ff0000;box-shadow:0 0 1.2px .2px rgba(255,0,0,0.90)"></div>
<div class="mk" style="left:210.4px;top:83.9px;background-color:rgba(255,0,0,0.78);border-color:#ff0000;box-shadow:0 0 1.2px .2px rgba(255,0,0,0.90)"></div>
<div class="mk" style="left:196.6px;top:93.9px;background-color:rgba(255,0,0,0.78);border-color:#ff0000;box-shadow:0 0 1.2px .2px rgba(255,0,0,0.90)"></div>
<div class="mk" style="left:204.7px;top:102.4px;background-color:rgba(255,255,0,0.78);border-color:#ffff00;box-shadow:0 0 1.2px .2px rgba(255,255,0,0.90)"></div>
<div class="mk" style="left:197.3px;top:102.9px;background-color:rgba(255,0,0,0.78);border-color:#ff0000;box-shadow:0 0 1.2px .2px rgba(255,0,0,0.90)"></div>
<div class="mk" style="left:203.3px;top:103.2px;background-color:rgba(255,0,0,0.78);border-color:#ff0000;box-shadow:0 0 1.2px .2px rgba(255,0,0,0.90)"></div>
<div class="mk" style="left:205.9px;top:108.1px;background-color:rgba(153,0,76,0.78);border-color:#99004c;box-shadow:0 0 1.2px .2px rgba(153,0,76,0.90)"></div>
<div class="mk" style="left:210.0px;top:113.8px;background-color:rgba(255,0,0,0.78);border-color:#ff0000;box-shadow:0 0 1.2px .2px rgba(255,0,0,0.90)"></div>
<div class="mk" style="left:222.2px;top:115.9px;background-color:rgba(255,126,0,0.78);border-color:#ff7e00;box-shadow:0 0 1.2px .2px rgba(255,126,0,0.90)"></div>
<div class="mk" style="left:224.1px;top:115.2px;background-color:rgba(255,255,0,0.78);border-color:#ffff00;box-shadow:0 0 1.2px .2px rgba(255,255,0,0.90)"></div>
<div class="mk" style="left:227.7px;top:125.0px;background-color:rgba(255,0,0,0.78);border-color:#ff0000;box-shadow:0 0 1.2px .2px rgba(255,0,0,0.90)"></div>
<div class="mk" style="left:232.2px;top:121.7px;background-color:rgba(255,0,0,0.78);border-color:#ff0000;box-shadow:0 0 1.2px .2px rgba(255,0,0,0.90)"></div>
<div class="mk" style="left:240.6px;top:133.8px;background-color:rgba(255,255,0,0.78);border-color:#ffff00;box-shadow:0 0 1.2px .2px rgba(255,255,0,0.90)"></div>
<div class="mk" style="left:256.7px;top:126.6px;background-color:rgba(255,255,0,0.78);border-color:#ffff00;box-shadow:0 0 1.2px .2px rgba(255,255,0,0.90)"></div>
<div class="mk" style="left:251.7px;top:132.3px;background-color:rgba(255,0,0,0.78);border-color:#ff0000;box-shadow:0 0 1.2px .2px rgba(255,0,0,0.90)"></div>
<div class="mk" style="left:269.0px;top:123.0px;background-color:rgba(255,255,0,0.78);border-color:#ffff00;box-shadow:0 0 1.2px .2px rgba(255,255,0,0.90)"></div>
<div class="mk" style="left:258.3px;top:143.7px;background-color:rgba(255,255,0,0.78);border-color:#ffff00;box-shadow:0 0 1.2px .2px rgba(255,255,0,0.90)"></div>
<div class="mk" style="left:258.4px;top:171.7px;background-color:rgba(255,255,0,0.78);border-color:#ffff00;box-shadow:0 0 1.2px .2px rgba(255,255,0,0.90)"></div>
<div class="mk" style="left:258.5px;top:72.6px;background-color:rgba(153,153,153,0.78);border-color:#999999;box-shadow:0 0 1.2px .2px rgba(153,153,153,0.90)"></div>
<div class="mk" style="left:273.5px;top:91.0px;background-color:rgba(255,255,0,0.78);border-color:#ffff00;box-shadow:0 0 1.2px .2px rgba(255,255,0,0.90)"></div>
<div class="mk" style="left:286.0px;top:87.6px;background-color:rgba(255,126,0,0.78);border-color:#ff7e00;box-shadow:0 0 1.2px .2px rgba(255,126,0,0.90)"></div>
<div class="mk" style="left:282.2px;top:108.4px;background-color:rgba(255,255,0,0.78);border-color:#ffff00;box-shadow:0 0 1.2px .2px rgba(255,255,0,0.90)"></div>
<div class="ml" style="left:62.7px;top:146.1px">85</div>
<div class="ml" style="left:72.3px;top:141.6px">N/A</div>
<div class="ml" style="left:78.5px;top:153.5px">79</div>
<div class="ml" style="left:85.3px;top:152.2px">84</div>
<div class="ml" style="left:109.4px;top:141.9px">97</div>
<div class="ml" style="left:90.1px;top:98.1px">52</div>
<div class="ml" style="left:114.9px;top:83.2px">144</div>
<div class="ml" style="left:120.0px;top:85.9px">158</div>
<div class="ml" style="left:143.8px;top:107.5px">N/A</div>
<div class="ml" style="left:159.3px;top:120.5px">N/A</div>
<div class="ml" style="left:137.9px;top:161.1px">N/A</div>
<div class="ml" style="left:157.6px;top:104.7px">69</div>
<div class="ml" style="left:162.9px;top:111.9px">64</div>
<div class="ml" style="left:167.4px;top:117.3px">70</div>
<div class="ml" style="left:173.2px;top:120.7px">50</div>
<div class="ml" style="left:175.7px;top:119.9px">80</div>
<div class="ml" style="left:180.1px;top:95.6px">85</div>
<div class="ml" style="left:148.7px;top:126.6px">71</div>
<div class="ml" style="left:137.7px;top:136.5px">56</div>
<div class="ml" style="left:147.9px;top:147.1px">154.</div>
<div class="ml" style="left:193.4px;top:120.3px">69</div>
<div class="ml" style="left:203.1px;top:130.5px">64</div>
<div class="ml" style="left:212.8px;top:132.7px">150</div>
<div class="ml" style="left:215.7px;top:139.9px">164</div>
<div class="ml" style="left:214.6px;top:150.3px">65</div>
<div class="ml" style="left:197.5px;top:87.9px">116</div>
<div class="ml" style="left:206.8px;top:84.6px">191</div>
<div class="ml" style="left:210.4px;top:83.9px">156</div>
<div class="ml" style="left:196.6px;top:93.9px">169</div>
<div class="ml" style="left:197.3px;top:102.9px">115</div>
<div class="ml" style="left:203.3px;top:103.2px">152</div>
<div class="ml" style="left:205.9px;top:108.1px">231</div>
<div class="ml" style="left:210.0px;top:113.8px">192</div>
<div class="ml" style="left:224.1px;top:115.2px">99</div>
<div class="ml" style="left:227.7px;top:125.0px">139</div>
<div class="ml" style="left:232.2px;top:121.7px">176</div>
<div class="ml" style="left:240.6px;top:133.8px">87</div>
<div class="ml" style="left:256.7px;top:126.6px">83</div>
<div class="ml" style="left:251.7px;top:132.3px">153</div>
<div class="ml" style="left:269.0px;top:123.0px">80</div>
<div class="ml" style="left:258.3px;top:143.7px">83</div>
<div class="ml" style="left:258.4px;top:171.7px">81</div>
<div class="ml" style="left:258.5px;top:72.6px">N/A</div>
<div class="ml" style="left:273.5px;top:91.0px">92</div>
<div class="ml" style="left:286.0px;top:87.6px">114</div>
<div class="ml" style="left:282.2px;top:108.4px">65</div>
<div class="abs pop">
<div class="tx" style="top:12.8px">Bishkek</div>
<div class="tx" style="top:21.1px">2020-11-23 7:00 PM</div>
<div class="tx" style="top:29.4px">(LT)</div>
<div class="ptab">
<div style="left:0;top:0;width:48px;height:16.2px;line-height:16.4px;color:#fff;font-weight:bold">Pollutant</div>
<div style="left:48px;top:0;width:26.4px;height:16.2px;line-height:16.4px;color:#fff;font-weight:bold">AQI</div>
<div style="left:.7px;top:16.2px;width:46.8px;height:16.1px;line-height:16.4px;background:#fff;color:#333">PM2.5</div>
<div style="left:48px;top:16.2px;width:25.5px;height:16.1px;line-height:16.4px;background:#ff0000;color:#fff;font-weight:bold">191</div>
</div>
</div>
<div class="abs tip"></div>
</div>

<div class="abs lab" style="top:3px">Select a City</div>
<div class="abs sel" style="top:24px">Bishkek<i style="right:20px;top:-.5px;color:#b0b0b0;font-size:8px;text-indent:0">×</i><i style="right:6.5px;top:8.6px;width:0;height:0;border-left:2.2px solid transparent;border-right:2.2px solid transparent;border-top:2.6px solid #a8a8a8"></i></div>
<div class="abs lab" style="top:57px">Select a Parameter</div>
<div class="abs sel" style="top:78px">PM2.5<i style="right:20px;top:-.5px;color:#b0b0b0;font-size:8px;text-indent:0">×</i><i style="right:6.5px;top:8.6px;width:0;height:0;border-left:2.2px solid transparent;border-right:2.2px solid transparent;border-top:2.6px solid #a8a8a8"></i></div>

<div class="abs" style="left:420.2px;top:110px;width:189.4px;height:39.9px;background:#fff;border:.7px solid #d6d6d6">
<div class="abs" style="left:5.6px;top:5.2px;font-size:7.9px;font-weight:bold;color:#3a3a3a">Bishkek</div>
<svg class="abs" style="left:163.9px;top:14.4px" width="19.9" height="19.9" viewBox="0 0 20 20"><rect width="20" height="20" fill="#f2b33d"/>
<circle cx="4.800" cy="15.200" r="2.100" fill="#fff"/>
<path d="M2.800 8.200A9 9 0 0 1 11.800 17.200" fill="none" stroke="#fff" stroke-width="2.600"/>
<path d="M2.800 3.400A13.800 13.800 0 0 1 16.600 17.200" fill="none" stroke="#fff" stroke-width="2.600"/></svg>
</div>

<div class="abs note" style="left:420px;top:156.8px">Note: Values above 500 are considered Beyond the AQI. Follow<br>recommendations for the Hazardous category. Additional information<br>on reducing exposure to extremely high levels of particle pollution is<br>available <b>here</b>.</div>

<div class="abs" style="left:3.6px;top:286.5px;width:607.5px;height:.8px;background:#c4c4c4"></div>
<div class="abs tab" style="left:3.6px;width:60.8px;background:#fff;color:#555;line-height:19.4px;border-radius:2.5px;box-shadow:inset 0 1.2px 0 #044983, inset .6px 0 0 #c4c4c4, inset -.6px 0 0 #c4c4c4;height:17.6px">AQI</div>
<div class="abs tab" style="left:67px;width:93.6px">Concentration</div>
<div class="abs tab" style="left:163.2px;width:77.8px">Historical</div>
<div class="abs lm" style="left:3.4px;top:294.6px;font-size:7.95px;line-height:10px;color:#333;white-space:nowrap">Learn more about how the Air Quality Index [AQI] is calculated from the EPA <b>here</b>.</div>

<svg class="abs" style="left:3.3px;top:315.7px" width="455.7" height="184.3" viewBox="3.3 315.7 455.7 184.3" font-family="'DejaVu Sans','Liberation Sans',sans-serif">
<rect x="3.3" y="315.7" width="455.7" height="200" fill="#fff"/>
<text x="37.5" y="456.10" font-size="5.6" font-weight="bold" text-anchor="end" fill="#444">0</text>
<line x1="46.4" x2="453.2" y1="433.26" y2="433.26" stroke="#e6e6e6" stroke-width="0.6"/>
<text x="37.5" y="435.26" font-size="5.6" font-weight="bold" text-anchor="end" fill="#444">100</text>
<line x1="46.4" x2="453.2" y1="412.42" y2="412.42" stroke="#e6e6e6" stroke-width="0.6"/>
<text x="37.5" y="414.42" font-size="5.6" font-weight="bold" text-anchor="end" fill="#444">200</text>
<line x1="46.4" x2="453.2" y1="391.58" y2="391.58" stroke="#e6e6e6" stroke-width="0.6"/>
<text x="37.5" y="393.58" font-size="5.6" font-weight="bold" text-anchor="end" fill="#444">300</text>
<line x1="46.4" x2="453.2" y1="370.74" y2="370.74" stroke="#e6e6e6" stroke-width="0.6"/>
<text x="37.5" y="372.74" font-size="5.6" font-weight="bold" text-anchor="end" fill="#444">400</text>
<line x1="46.4" x2="453.2" y1="349.90" y2="349.90" stroke="#e6e6e6" stroke-width="0.6"/>
<text x="37.5" y="351.90" font-size="5.6" font-weight="bold" text-anchor="end" fill="#444">500</text>
<line x1="46.4" x2="453.2" y1="454.10" y2="454.10" stroke="#ccd6eb" stroke-width="0.7"/>
<line x1="46.40" x2="46.40" y1="454.10" y2="459.70" stroke="#ccd6eb" stroke-width="0.6"/>
<line x1="63.35" x2="63.35" y1="454.10" y2="459.70" stroke="#ccd6eb" stroke-width="0.6"/>
<line x1="80.30" x2="80.30" y1="454.10" y2="459.70" stroke="#ccd6eb" stroke-width="0.6"/>
<line x1="97.25" x2="97.25" y1="454.10" y2="459.70" stroke="#ccd6eb" stroke-width="0.6"/>
<line x1="114.20" x2="114.20" y1="454.10" y2="459.70" stroke="#ccd6eb" stroke-width="0.6"/>
<line x1="131.15" x2="131.15" y1="454.10" y2="459.70" stroke="#ccd6eb" stroke-width="0.6"/>
<line x1="148.10" x2="148.10" y1="454.10" y2="459.70" stroke="#ccd6eb" stroke-width="0.6"/>
<line x1="165.05" x2="165.05" y1="454.10" y2="459.70" stroke="#ccd6eb" stroke-width="0.6"/>
<line x1="182.00" x2="182.00" y1="454.10" y2="459.70" stroke="#ccd6eb" stroke-width="0.6"/>
<line x1="198.95" x2="198.95" y1="454.10" y2="459.70" stroke="#ccd6eb" stroke-width="0.6"/>
<line x1="215.90" x2="215.90" y1="454.10" y2="459.70" stroke="#ccd6eb" stroke-width="0.6"/>
<line x1="232.85" x2="232.85" y1="454.10" y2="459.70" stroke="#ccd6eb" stroke-width="0.6"/>
<line x1="249.80" x2="249.80" y1="454.10" y2="459.70" stroke="#ccd6eb" stroke-width="0.6"/>
<line x1="266.75" x2="266.75" y1="454.10" y2="459.70" stroke="#ccd6eb" stroke-width="0.6"/>
<line x1="283.70" x2="283.70" y1="454.10" y2="459.70" stroke="#ccd6eb" stroke-width="0.6"/>
<line x1="300.65" x2="300.65" y1="454.10" y2="459.70" stroke="#ccd6eb" stroke-width="0.6"/>
<line x1="317.60" x2="317.60" y1="454.10" y2="459.70" stroke="#ccd6eb" stroke-width="0.6"/>
<line x1="334.55" x2="334.55" y1="454.10" y2="459.70" stroke="#ccd6eb" stroke-width="0.6"/>
<line x1="351.50" x2="351.50" y1="454.10" y2="459.70" stroke="#ccd6eb" stroke-width="0.6"/>
<line x1="368.45" x2="368.45" y1="454.10" y2="459.70" stroke="#ccd6eb" stroke-width="0.6"/>
<line x1="385.40" x2="385.40" y1="454.10" y2="459.70" stroke="#ccd6eb" stroke-width="0.6"/>
<line x1="402.35" x2="402.35" y1="454.10" y2="459.70" stroke="#ccd6eb" stroke-width="0.6"/>
<line x1="419.30" x2="419.30" y1="454.10" y2="459.70" stroke="#ccd6eb" stroke-width="0.6"/>
<line x1="436.25" x2="436.25" y1="454.10" y2="459.70" stroke="#ccd6eb" stroke-width="0.6"/>
<line x1="453.20" x2="453.20" y1="454.10" y2="459.70" stroke="#ccd6eb" stroke-width="0.6"/>
<rect x="50.58" y="394.71" width="8.60" height="59.39" fill="#99004c" stroke="#222" stroke-opacity="0.9" stroke-width="0.7"/>
<text transform="translate(56.38,463.60) rotate(-45)" font-size="6.2" text-anchor="end" fill="#666">8 PM</text>
<rect x="67.52" y="395.75" width="8.60" height="58.35" fill="#99004c" stroke="#222" stroke-opacity="0.9" stroke-width="0.7"/>
<text transform="translate(73.32,463.60) rotate(-45)" font-size="6.2" text-anchor="end" fill="#666">9 PM</text>
<rect x="84.48" y="391.37" width="8.60" height="62.73" fill="#4c0026" stroke="#222" stroke-opacity="0.9" stroke-width="0.7"/>
<text transform="translate(90.28,463.60) rotate(-45)" font-size="6.2" text-anchor="end" fill="#666">10 PM</text>
<rect x="101.42" y="389.08" width="8.60" height="65.02" fill="#4c0026" stroke="#222" stroke-opacity="0.9" stroke-width="0.7"/>
<text transform="translate(107.22,463.60) rotate(-45)" font-size="6.2" text-anchor="end" fill="#666">11 PM</text>
<rect x="118.37" y="388.25" width="8.60" height="65.85" fill="#4c0026" stroke="#222" stroke-opacity="0.9" stroke-width="0.7"/>
<text transform="translate(124.17,463.60) rotate(-45)" font-size="6.2" text-anchor="end" fill="#666">Nov 23, 2020 12 AM</text>
<rect x="135.32" y="395.75" width="8.60" height="58.35" fill="#99004c" stroke="#222" stroke-opacity="0.9" stroke-width="0.7"/>
<text transform="translate(141.12,463.60) rotate(-45)" font-size="6.2" text-anchor="end" fill="#666">1 AM</text>
<rect x="152.27" y="401.17" width="8.60" height="52.93" fill="#99004c" stroke="#222" stroke-opacity="0.9" stroke-width="0.7"/>
<text transform="translate(158.07,463.60) rotate(-45)" font-size="6.2" text-anchor="end" fill="#666">2 AM</text>
<rect x="169.22" y="414.30" width="8.60" height="39.80" fill="#ff0000" stroke="#222" stroke-opacity="0.9" stroke-width="0.7"/>
<text transform="translate(175.03,463.60) rotate(-45)" font-size="6.2" text-anchor="end" fill="#666">3 AM</text>
<rect x="186.17" y="418.67" width="8.60" height="35.43" fill="#ff0000" stroke="#222" stroke-opacity="0.9" stroke-width="0.7"/>
<text transform="translate(191.97,463.60) rotate(-45)" font-size="6.2" text-anchor="end" fill="#666">4 AM</text>
<rect x="203.12" y="421.59" width="8.60" height="32.51" fill="#ff0000" stroke="#222" stroke-opacity="0.9" stroke-width="0.7"/>
<text transform="translate(208.93,463.60) rotate(-45)" font-size="6.2" text-anchor="end" fill="#666">5 AM</text>
<rect x="220.07" y="426.80" width="8.60" height="27.30" fill="#ff7e00" stroke="#222" stroke-opacity="0.9" stroke-width="0.7"/>
<text transform="translate(225.88,463.60) rotate(-45)" font-size="6.2" text-anchor="end" fill="#666">6 AM</text>
<rect x="237.02" y="431.18" width="8.60" height="22.92" fill="#ff7e00" stroke="#222" stroke-opacity="0.9" stroke-width="0.7"/>
<text transform="translate(242.82,463.60) rotate(-45)" font-size="6.2" text-anchor="end" fill="#666">7 AM</text>
<rect x="253.97" y="434.09" width="8.60" height="20.01" fill="#ffff00" stroke="#222" stroke-opacity="0.9" stroke-width="0.7"/>
<text transform="translate(259.77,463.60) rotate(-45)" font-size="6.2" text-anchor="end" fill="#666">8 AM</text>
<rect x="270.92" y="433.47" width="8.60" height="20.63" fill="#ffff00" stroke="#222" stroke-opacity="0.9" stroke-width="0.7"/>
<text transform="translate(276.72,463.60) rotate(-45)" font-size="6.2" text-anchor="end" fill="#666">9 AM</text>
<rect x="287.87" y="435.76" width="8.60" height="18.34" fill="#ffff00" stroke="#222" stroke-opacity="0.9" stroke-width="0.7"/>
<text transform="translate(293.67,463.60) rotate(-45)" font-size="6.2" text-anchor="end" fill="#666">10 AM</text>
<rect x="304.82" y="431.80" width="8.60" height="22.30" fill="#ff7e00" stroke="#222" stroke-opacity="0.9" stroke-width="0.7"/>
<text transform="translate(310.62,463.60) rotate(-45)" font-size="6.2" text-anchor="end" fill="#666">11 AM</text>
<rect x="321.77" y="428.68" width="8.60" height="25.42" fill="#ff7e00" stroke="#222" stroke-opacity="0.9" stroke-width="0.7"/>
<text transform="translate(327.57,463.60) rotate(-45)" font-size="6.2" text-anchor="end" fill="#666">12 PM</text>
<rect x="338.72" y="434.30" width="8.60" height="19.80" fill="#ffff00" stroke="#222" stroke-opacity="0.9" stroke-width="0.7"/>
<text transform="translate(344.52,463.60) rotate(-45)" font-size="6.2" text-anchor="end" fill="#666">1 PM</text>
<rect x="355.67" y="439.51" width="8.60" height="14.59" fill="#ffff00" stroke="#222" stroke-opacity="0.9" stroke-width="0.7"/>
<text transform="translate(361.47,463.60) rotate(-45)" font-size="6.2" text-anchor="end" fill="#666">2 PM</text>
<rect x="372.62" y="439.51" width="8.60" height="14.59" fill="#ffff00" stroke="#222" stroke-opacity="0.9" stroke-width="0.7"/>
<text transform="translate(378.42,463.60) rotate(-45)" font-size="6.2" text-anchor="end" fill="#666">3 PM</text>
<rect x="389.57" y="440.35" width="8.60" height="13.75" fill="#ffff00" stroke="#222" stroke-opacity="0.9" stroke-width="0.7"/>
<text transform="translate(395.37,463.60) rotate(-45)" font-size="6.2" text-anchor="end" fill="#666">4 PM</text>
<rect x="406.52" y="440.76" width="8.60" height="13.34" fill="#ffff00" stroke="#222" stroke-opacity="0.9" stroke-width="0.7"/>
<text transform="translate(412.32,463.60) rotate(-45)" font-size="6.2" text-anchor="end" fill="#666">5 PM</text>
<rect x="423.47" y="419.92" width="8.60" height="34.18" fill="#ff0000" stroke="#222" stroke-opacity="0.9" stroke-width="0.7"/>
<text transform="translate(429.27,463.60) rotate(-45)" font-size="6.2" text-anchor="end" fill="#666">6 PM</text>
<rect x="440.42" y="414.30" width="8.60" height="39.80" fill="#ff0000" stroke="#222" stroke-opacity="0.9" stroke-width="0.7"/>
<text transform="translate(446.22,463.60) rotate(-45)" font-size="6.2" text-anchor="end" fill="#666">7 PM</text>
<text x="231" y="328.5" font-size="10.2" text-anchor="middle" fill="#333">Bishkek – PM2.5</text>
<text transform="translate(20.6,402) rotate(-90)" font-size="6.6" text-anchor="middle" fill="#333">AQI</text>
</svg>

<div class="abs cc">
<div style="top:0;height:42.2px;background:#044983"></div>
<div style="top:42.2px;height:66.2px;background:#ff0000;left:.7px;right:.7px"></div>
<div style="top:4.6px;font-size:8.5px;line-height:10px;font-weight:bold;color:#fff">Current Conditions</div>
<div style="top:16.8px;font-size:6.8px;line-height:9px;font-weight:bold;color:#fff">observed at</div>
<div style="top:28.6px;font-size:8.5px;line-height:10px;font-weight:bold;color:#fff">Nov 23, 2020 7:00 PM (LT)</div>
<div style="top:52.6px;font-size:11.3px;line-height:14px;font-weight:bold;color:#fff">191 AQI</div>
<div style="top:68.8px;font-size:11.3px;line-height:14px;font-weight:bold;color:#fff">Unhealthy</div>
<div style="top:84.8px;font-size:11.3px;line-height:14px;font-weight:bold;color:#fff">PM2.5</div>
<div style="top:113px;font-size:6.8px;line-height:9px;font-weight:bold;color:#222">Health Message</div>
<div style="top:126.2px;left:3.6px;text-align:left;font-size:6.85px;line-height:12px;color:#555">Everyone may begin to experience health<br>effects when AQI values are between 151<br>and 200. Members of sensitive groups may<br>experience more serious health effects.</div>
</div>
<div class="abs note" style="left:468px;top:493.6px">Note: Values above 500 are considered Beyond the</div>
</body></html>
